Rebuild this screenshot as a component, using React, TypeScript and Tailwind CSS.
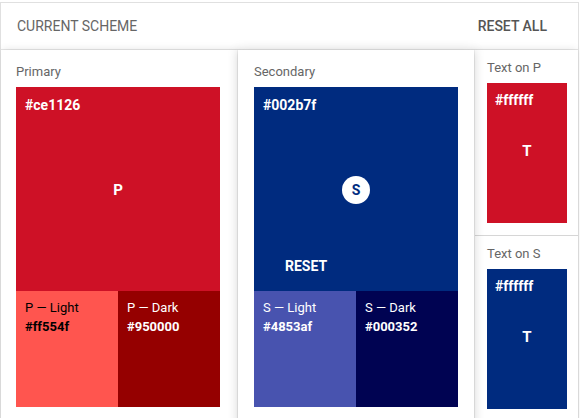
const font = { fontFamily: "Roboto, 'Liberation Sans', sans-serif" };

type Shade = { label: string; hex: string; bg: string; text: string };

const ShadeCell = ({ shade }: { shade: Shade }) => (
  <div className={`flex-1 px-[9px] pt-[9px] ${shade.bg} ${shade.text}`}>
    <div className="text-[13px] leading-[16px]">{shade.label}</div>
    <div className="mt-[3px] text-[13px] font-bold leading-[16px]">{shade.hex}</div>
  </div>
);

const MainColumn = ({
  title,
  hex,
  bg,
  letter,
  circle,
  shades,
  raised,
}: {
  title: string;
  hex: string;
  bg: string;
  letter: string;
  circle?: boolean;
  shades: Shade[];
  raised?: boolean;
}) => (
  <div
    className={`flex w-[236px] shrink-0 flex-col bg-white pt-[14px] ${
      raised
        ? "relative z-10 pl-4 pr-4 shadow-[0_0_10px_rgba(0,0,0,0.18)]"
        : "pl-[15px] pr-[17px] shadow-[2px_0_8px_rgba(0,0,0,0.12)]"
    }`}
  >
    <div className="mb-[7px] text-[13px] leading-[16px] text-[#666]">{title}</div>
    <div className="flex h-[320px] flex-col">
      <div className={`relative flex h-[204px] flex-col ${bg} text-white`}>
        <div className="px-[9px] pt-[10px] text-[14px] font-bold leading-[16px]">{hex}</div>
        <div className="flex flex-1 items-center justify-center pb-[24px]">
          {circle ? (
            <div className="flex h-[28px] w-[28px] items-center justify-center rounded-full bg-white text-[14px] font-bold text-[#002b7f]">
              {letter}
            </div>
          ) : (
            <span className="text-[15px] font-bold">{letter}</span>
          )}
        </div>
        {circle && (
          <button className="absolute bottom-[17px] left-[31px] text-[14px] font-bold leading-[16px] text-white">
            RESET
          </button>
        )}
      </div>
      <div className="flex flex-1">
        {shades.map((s) => (
          <ShadeCell key={s.label} shade={s} />
        ))}
      </div>
    </div>
  </div>
);

const TextSwatch = ({ title, bg }: { title: string; bg: string }) => (
  <div className="pl-3 pt-[10px]">
    <div className="mb-[7px] text-[13px] leading-[16px] text-[#666]">{title}</div>
    <div className={`flex h-[140px] w-[80px] flex-col ${bg} text-white`}>
      <div className="px-2 pt-[9px] text-[14px] font-bold leading-[16px]">#ffffff</div>
      <div className="flex flex-1 items-center justify-center pb-[28px]">
        <span className="text-[15px] font-bold">T</span>
      </div>
    </div>
  </div>
);

export default function App() {
  return (
    <div className="h-[418px] w-[580px] overflow-hidden bg-white pt-[2px]" style={font}>
      <div className="w-[579px] border-l border-r border-t border-[#e0e0e0]">
        <div className="flex h-[47px] items-center justify-between border-b border-[#e6e6e6] pl-4 pr-[31px] pt-[1px]">
          <span className="text-[14px] text-[#666]">CURRENT SCHEME</span>
          <span className="text-[14px] font-medium text-[#555]">RESET ALL</span>
        </div>
        <div className="flex h-[380px]">
          <MainColumn
            title="Primary"
            hex="#ce1126"
            bg="bg-[#ce1126]"
            letter="P"
            shades={[
              { label: "P — Light", hex: "#ff554f", bg: "bg-[#ff554f]", text: "text-black" },
              { label: "P — Dark", hex: "#950000", bg: "bg-[#950000]", text: "text-white" },
            ]}
          />
          <div className="w-px shrink-0" />
          <MainColumn
            title="Secondary"
            hex="#002b7f"
            bg="bg-[#002b7f]"
            letter="S"
            circle
            raised
            shades={[
              { label: "S — Light", hex: "#4853af", bg: "bg-[#4853af]", text: "text-white" },
              { label: "S — Dark", hex: "#000352", bg: "bg-[#000352]", text: "text-white" },
            ]}
          />
          <div className="ml-px flex flex-1 flex-col bg-white shadow-[-2px_0_8px_rgba(0,0,0,0.12)]">
            <div className="h-[186px] border-b border-[#d6d6d6]">
              <TextSwatch title="Text on P" bg="bg-[#ce1126]" />
            </div>
            <TextSwatch title="Text on S" bg="bg-[#002b7f]" />
          </div>
        </div>
      </div>
    </div>
  );
}
